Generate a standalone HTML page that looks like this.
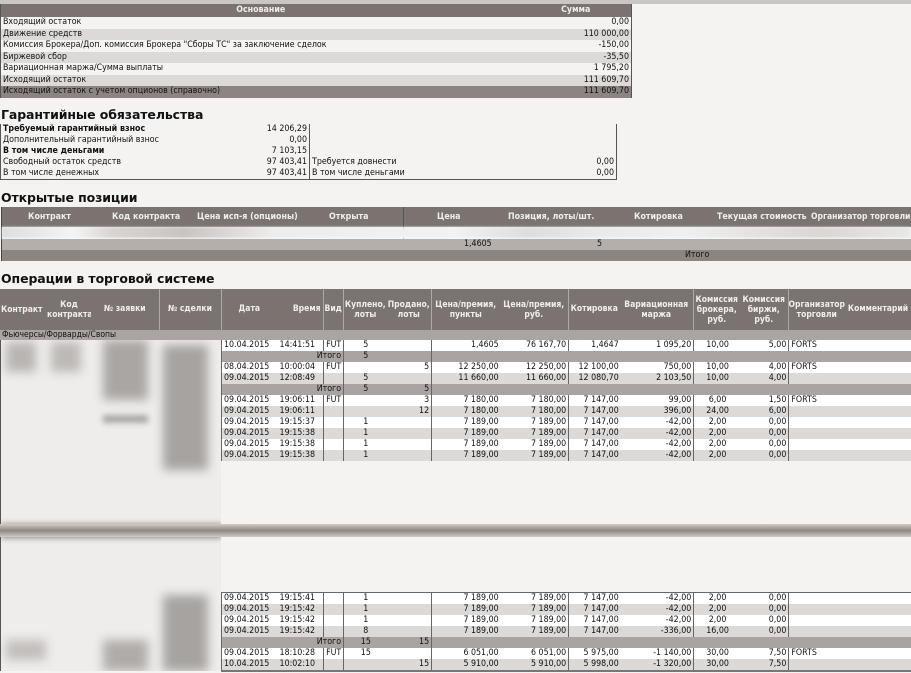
<!DOCTYPE html>
<html><head><meta charset="utf-8"><style>
*{margin:0;padding:0;box-sizing:border-box}
body{width:911px;height:673px;overflow:hidden;background:#f4f3f2;font-family:"DejaVu Sans Condensed","DejaVu Sans","Liberation Sans",sans-serif;font-size:8.8px;color:#111;position:relative}
.a{position:absolute;white-space:nowrap}
h2{position:absolute;font-family:"DejaVu Sans","Liberation Sans",sans-serif;font-weight:bold;font-size:12.5px;color:#111;letter-spacing:-0.1px}
table{border-collapse:collapse;table-layout:fixed}
td{white-space:nowrap;overflow:hidden;padding:0 2px;line-height:11px;height:11px}
.r{text-align:right}.c{text-align:center}
.hd{background:#7b7370;color:#f0eeec;font-weight:bold}
.g{background:#dcd9d6}
.it{background:#a9a4a1}
.top td{height:11.5px;line-height:11.5px}
.ops td.b{border-right:1px solid #666}
</style></head><body>

<div class="a" style="left:0;top:0;width:911px;height:4px;background:#c9c6c3"></div>

<table class="a top" style="left:0;top:4px;width:631px;border-left:1px solid #555;border-right:1px solid #555">
<colgroup><col style="width:520px"><col style="width:111px"></colgroup>
<tr class="hd"><td class="c" style="height:13px">Основание</td><td class="c" style="height:13px">Сумма</td></tr>
<tr><td>Входящий остаток</td><td class="r">0,00</td></tr>
<tr class="g"><td>Движение средств</td><td class="r">110 000,00</td></tr>
<tr><td>Комиссия Брокера/Доп. комиссия Брокера "Сборы ТС" за заключение сделок</td><td class="r">-150,00</td></tr>
<tr class="g"><td>Биржевой сбор</td><td class="r">-35,50</td></tr>
<tr><td>Вариационная маржа/Сумма выплаты</td><td class="r">1 795,20</td></tr>
<tr class="g"><td>Исходящий остаток</td><td class="r">111 609,70</td></tr>
<tr style="background:#8b8480"><td>Исходящий остаток с учетом опционов (справочно)</td><td class="r">111 609,70</td></tr>
</table>

<h2 style="left:1px;top:107px">Гарантийные обязательства</h2>
<table class="a" style="left:0;top:124px;width:616px;border:1px solid #555;border-top:none">
<colgroup><col style="width:220px"><col style="width:89px"><col style="width:220px"><col style="width:87px"></colgroup>
<tr><td><b>Требуемый гарантийный взнос</b></td><td class="r" style="border-right:1px solid #555">14 206,29</td><td></td><td></td></tr>
<tr><td>Дополнительный гарантийный взнос</td><td class="r" style="border-right:1px solid #555">0,00</td><td></td><td></td></tr>
<tr><td><b>В том числе деньгами</b></td><td class="r" style="border-right:1px solid #555">7 103,15</td><td></td><td></td></tr>
<tr><td>Свободный остаток средств</td><td class="r" style="border-right:1px solid #555">97 403,41</td><td>Требуется довнести</td><td class="r">0,00</td></tr>
<tr><td>В том числе денежных</td><td class="r" style="border-right:1px solid #555">97 403,41</td><td>В том числе деньгами</td><td class="r">0,00</td></tr>
</table>

<h2 style="left:1px;top:190px">Открытые позиции</h2>
<div class="a hd" style="left:1px;top:207px;width:910px;height:20px"></div>
<div class="a" style="left:1px;top:207px;width:1px;height:54px;background:#444"></div>
<div class="a" style="left:403px;top:207px;width:1px;height:54px;background:#555"></div>
<div class="a" style="color:#f0eeec;font-weight:bold;top:212px;left:28px">Контракт</div>
<div class="a" style="color:#f0eeec;font-weight:bold;top:212px;left:112px">Код контракта</div>
<div class="a" style="color:#f0eeec;font-weight:bold;top:212px;left:197px">Цена исп-я (опционы)</div>
<div class="a" style="color:#f0eeec;font-weight:bold;top:212px;left:329px">Открыта</div>
<div class="a" style="color:#f0eeec;font-weight:bold;top:212px;left:437px">Цена</div>
<div class="a" style="color:#f0eeec;font-weight:bold;top:212px;left:508px">Позиция, лоты/шт.</div>
<div class="a" style="color:#f0eeec;font-weight:bold;top:212px;left:634px">Котировка</div>
<div class="a" style="color:#f0eeec;font-weight:bold;top:212px;left:717px">Текущая стоимость</div>
<div class="a" style="color:#f0eeec;font-weight:bold;top:212px;left:811px;font-size:8.5px">Организатор торговли</div>
<div class="a" style="left:2px;top:227px;width:908px;height:12px;background:linear-gradient(90deg,#ddd 0,#f4f4f4 8%,#d8d5d3 12%,#c8c4c1 20%,#ededed 30%,#f2f2f2 50%,#ddd 58%,#e9e9e9 65%,#f0f0f0 75%,#d9d6d4 90%,#e8e8e8 100%);border-bottom:1px solid #fff;filter:blur(1px)"></div>
<div class="a" style="left:2px;top:239px;width:909px;height:11px;background:#b5afac"></div>
<div class="a" style="left:464px;top:239px;line-height:11px">1,4605</div>
<div class="a" style="left:597px;top:239px;line-height:11px">5</div>
<div class="a" style="left:2px;top:250px;width:909px;height:11px;background:#8b847f"></div>
<div class="a" style="left:685px;top:250px;line-height:11px">Итого</div>

<h2 style="left:1px;top:271px">Операции в торговой системе</h2>
<table class="a" style="left:0;top:289px;width:911px;font-size:8.5px">
<colgroup><col style="width:47px"><col style="width:44px"><col style="width:68px"><col style="width:62px"><col style="width:56px"><col style="width:46px"><col style="width:20px"><col style="width:44px"><col style="width:44px"><col style="width:69px"><col style="width:68px"><col style="width:52px"><col style="width:73px"><col style="width:47px"><col style="width:48px"><col style="width:57px"><col style="width:66px"></colgroup>
<tr class="hd" style="height:41px">
<td style="height:41px;line-height:10px;padding:0 1px">Контракт</td>
<td class="c" style="line-height:10px;padding:0">Код<br>контракта</td>
<td class="c" style="border-right:1px solid #aaa">№ заявки</td>
<td class="c" style="border-right:1px solid #aaa">№ сделки</td>
<td class="c">Дата</td>
<td class="r">Время</td>
<td style="border-left:1px solid #aaa;border-right:1px solid #aaa;padding:0 1px">Вид</td>
<td class="c" style="line-height:10px;padding:0">Куплено,<br>лоты</td>
<td class="c" style="line-height:10px;padding:0">Продано,<br>лоты</td>
<td class="c" style="line-height:10px;border-left:1px solid #aaa;padding:0">Цена/премия,<br>пункты</td>
<td class="c" style="line-height:10px;border-right:1px solid #aaa;padding:0">Цена/премия,<br>руб.</td>
<td class="c" style="padding:0">Котировка</td>
<td class="c" style="line-height:10px;border-right:1px solid #aaa;padding:0">Вариационная<br>маржа</td>
<td class="c" style="line-height:10px;padding:0">Комиссия<br>брокера,<br>руб.</td>
<td class="c" style="line-height:10px;border-right:1px solid #aaa;padding:0">Комиссия<br>биржи,<br>руб.</td>
<td class="c" style="line-height:10px;padding:0">Организатор<br>торговли</td>
<td class="c" style="padding:0">Комментарий</td>
</tr>
<tr style="background:#aaa5a2"><td colspan="17" style="height:10px;line-height:10px">Фьючерсы/Форварды/Свопы</td></tr>
</table>

<div class="a" style="left:0;top:340px;width:221px;height:331px;background:#eeedec;overflow:hidden;border-left:1px solid #555">
 <div class="a" style="left:5px;top:2px;width:30px;height:30px;background:#b9b5b2;filter:blur(5px)"></div>
 <div class="a" style="left:50px;top:2px;width:30px;height:30px;background:#bdb9b6;filter:blur(5px)"></div>
 <div class="a" style="left:102px;top:0;width:45px;height:60px;background:#aaa6a3;filter:blur(5px)"></div>
 <div class="a" style="left:102px;top:75px;width:45px;height:8px;background:#aaa6a3;filter:blur(3px)"></div>
 <div class="a" style="left:162px;top:5px;width:45px;height:125px;background:#a7a3a0;filter:blur(5px)"></div>
 <div class="a" style="left:0;top:184px;width:221px;height:14px;background:#8d8782;filter:blur(3px)"></div>
 <div class="a" style="left:162px;top:255px;width:45px;height:76px;background:#a7a3a0;filter:blur(5px)"></div>
 <div class="a" style="left:102px;top:300px;width:45px;height:31px;background:#b0aca9;filter:blur(5px)"></div>
 <div class="a" style="left:5px;top:300px;width:40px;height:20px;background:#c2bebb;filter:blur(5px)"></div>
</div>

<div class="a" style="left:221px;top:461px;width:690px;height:131px;background:#f4f3f2"></div>
<div class="a" style="left:0;top:524px;width:911px;height:13px;background:linear-gradient(#cfcbc8,#8d8782 50%,#cfcbc8)"></div>

<table class="a ops" style="left:221px;top:340px;width:690px;border-left:1px solid #666">
<colgroup><col style="width:56px"><col style="width:46px"><col style="width:20px"><col style="width:44px"><col style="width:44px"><col style="width:69px"><col style="width:68px"><col style="width:52px"><col style="width:73px"><col style="width:47px"><col style="width:48px"><col style="width:57px"><col style="width:65px"></colgroup>
<tr style="background:#fff"><td>10.04.2015</td><td class="b">14:41:51</td><td class="b">FUT</td><td class="c">5</td><td class="b"></td><td class="r">1,4605</td><td class="r b">76 167,70</td><td class="r">1,4647</td><td class="r b">1 095,20</td><td class="c">10,00</td><td class="r b">5,00</td><td>FORTS</td><td></td></tr>
<tr class="it"><td></td><td colspan="2" class="r b">Итого</td><td class="c">5</td><td class="b"></td><td colspan="8"></td></tr>
<tr style="background:#fff"><td>08.04.2015</td><td class="b">10:00:04</td><td class="b">FUT</td><td></td><td class="r b">5</td><td class="r">12 250,00</td><td class="r b">12 250,00</td><td class="r">12 100,00</td><td class="r b">750,00</td><td class="c">10,00</td><td class="r b">4,00</td><td>FORTS</td><td></td></tr>
<tr class="g"><td>09.04.2015</td><td class="b">12:08:49</td><td class="b"></td><td class="c">5</td><td class="b"></td><td class="r">11 660,00</td><td class="r b">11 660,00</td><td class="r">12 080,70</td><td class="r b">2 103,50</td><td class="c">10,00</td><td class="r b">4,00</td><td></td><td></td></tr>
<tr class="it"><td></td><td colspan="2" class="r b">Итого</td><td class="c">5</td><td class="r b">5</td><td colspan="8"></td></tr>
<tr style="background:#fff"><td>09.04.2015</td><td class="b">19:06:11</td><td class="b">FUT</td><td></td><td class="r b">3</td><td class="r">7 180,00</td><td class="r b">7 180,00</td><td class="r">7 147,00</td><td class="r b">99,00</td><td class="c">6,00</td><td class="r b">1,50</td><td>FORTS</td><td></td></tr>
<tr class="g"><td>09.04.2015</td><td class="b">19:06:11</td><td class="b"></td><td></td><td class="r b">12</td><td class="r">7 180,00</td><td class="r b">7 180,00</td><td class="r">7 147,00</td><td class="r b">396,00</td><td class="c">24,00</td><td class="r b">6,00</td><td></td><td></td></tr>
<tr style="background:#fff"><td>09.04.2015</td><td class="b">19:15:37</td><td class="b"></td><td class="c">1</td><td class="b"></td><td class="r">7 189,00</td><td class="r b">7 189,00</td><td class="r">7 147,00</td><td class="r b">-42,00</td><td class="c">2,00</td><td class="r b">0,00</td><td></td><td></td></tr>
<tr class="g"><td>09.04.2015</td><td class="b">19:15:38</td><td class="b"></td><td class="c">1</td><td class="b"></td><td class="r">7 189,00</td><td class="r b">7 189,00</td><td class="r">7 147,00</td><td class="r b">-42,00</td><td class="c">2,00</td><td class="r b">0,00</td><td></td><td></td></tr>
<tr style="background:#fff"><td>09.04.2015</td><td class="b">19:15:38</td><td class="b"></td><td class="c">1</td><td class="b"></td><td class="r">7 189,00</td><td class="r b">7 189,00</td><td class="r">7 147,00</td><td class="r b">-42,00</td><td class="c">2,00</td><td class="r b">0,00</td><td></td><td></td></tr>
<tr class="g"><td>09.04.2015</td><td class="b">19:15:38</td><td class="b"></td><td class="c">1</td><td class="b"></td><td class="r">7 189,00</td><td class="r b">7 189,00</td><td class="r">7 147,00</td><td class="r b">-42,00</td><td class="c">2,00</td><td class="r b">0,00</td><td></td><td></td></tr>
</table>

<table class="a ops" style="left:221px;top:592px;width:690px;border-top:1px solid #666;border-bottom:2px solid #777;border-left:1px solid #666">
<colgroup><col style="width:56px"><col style="width:46px"><col style="width:20px"><col style="width:44px"><col style="width:44px"><col style="width:69px"><col style="width:68px"><col style="width:52px"><col style="width:73px"><col style="width:47px"><col style="width:48px"><col style="width:57px"><col style="width:65px"></colgroup>
<tr style="background:#fff"><td>09.04.2015</td><td class="b">19:15:41</td><td class="b"></td><td class="c">1</td><td class="b"></td><td class="r">7 189,00</td><td class="r b">7 189,00</td><td class="r">7 147,00</td><td class="r b">-42,00</td><td class="c">2,00</td><td class="r b">0,00</td><td></td><td></td></tr>
<tr class="g"><td>09.04.2015</td><td class="b">19:15:42</td><td class="b"></td><td class="c">1</td><td class="b"></td><td class="r">7 189,00</td><td class="r b">7 189,00</td><td class="r">7 147,00</td><td class="r b">-42,00</td><td class="c">2,00</td><td class="r b">0,00</td><td></td><td></td></tr>
<tr style="background:#fff"><td>09.04.2015</td><td class="b">19:15:42</td><td class="b"></td><td class="c">1</td><td class="b"></td><td class="r">7 189,00</td><td class="r b">7 189,00</td><td class="r">7 147,00</td><td class="r b">-42,00</td><td class="c">2,00</td><td class="r b">0,00</td><td></td><td></td></tr>
<tr class="g"><td>09.04.2015</td><td class="b">19:15:42</td><td class="b"></td><td class="c">8</td><td class="b"></td><td class="r">7 189,00</td><td class="r b">7 189,00</td><td class="r">7 147,00</td><td class="r b">-336,00</td><td class="c">16,00</td><td class="r b">0,00</td><td></td><td></td></tr>
<tr class="it"><td></td><td colspan="2" class="r b">Итого</td><td class="c">15</td><td class="r b">15</td><td colspan="8"></td></tr>
<tr style="background:#fff"><td>09.04.2015</td><td class="b">18:10:28</td><td class="b">FUT</td><td class="c">15</td><td class="b"></td><td class="r">6 051,00</td><td class="r b">6 051,00</td><td class="r">5 975,00</td><td class="r b">-1 140,00</td><td class="c">30,00</td><td class="r b">7,50</td><td>FORTS</td><td></td></tr>
<tr class="g"><td>10.04.2015</td><td class="b">10:02:10</td><td class="b"></td><td></td><td class="r b">15</td><td class="r">5 910,00</td><td class="r b">5 910,00</td><td class="r">5 998,00</td><td class="r b">-1 320,00</td><td class="c">30,00</td><td class="r b">7,50</td><td></td><td></td></tr>
</table>
</body></html>
